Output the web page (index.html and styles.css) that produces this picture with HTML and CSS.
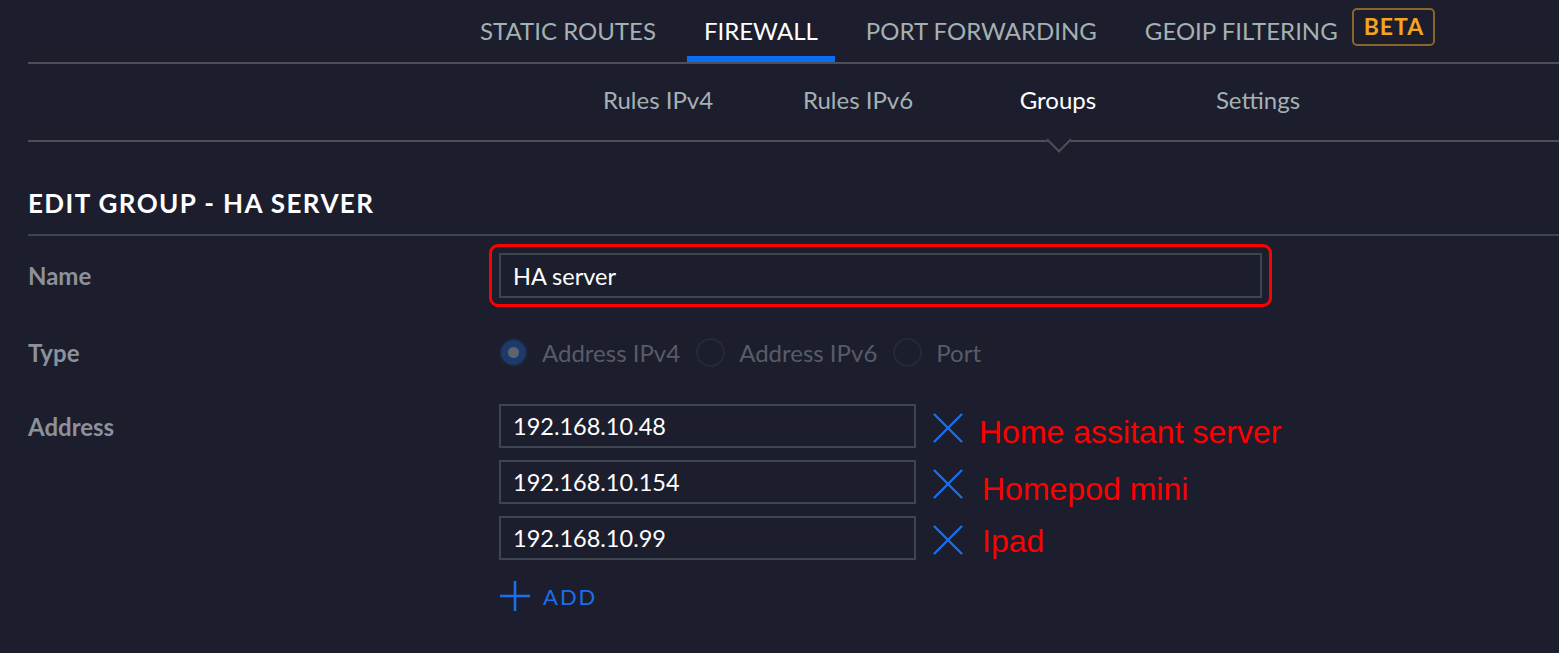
FILE: index.html
```html
<!DOCTYPE html>
<html>
<head>
<meta charset="utf-8">
<link rel="stylesheet" href="styles.css">
</head>
<body>
<div class="page">
  <nav class="tabs">
    <div class="tab">STATIC ROUTES</div>
    <div class="tab active">FIREWALL</div>
    <div class="tab">PORT FORWARDING</div>
    <div class="tab">GEOIP FILTERING <span class="beta">BETA</span></div>
  </nav>
  <nav class="subtabs">
    <div class="subtab">Rules IPv4</div>
    <div class="subtab">Rules IPv6</div>
    <div class="subtab active">Groups</div>
    <div class="subtab">Settings</div>
  </nav>
  <h1 class="title">EDIT GROUP - HA SERVER</h1>
  <div class="form">
    <div class="row row-name">
      <div class="label">Name</div>
      <div class="highlight">
        <div class="input wide">HA server</div>
      </div>
    </div>
    <div class="row row-type">
      <div class="label">Type</div>
      <div class="radios">
        <span class="radio checked"></span><span class="radio-label">Address IPv4</span>
        <span class="radio"></span><span class="radio-label">Address IPv6</span>
        <span class="radio"></span><span class="radio-label">Port</span>
      </div>
    </div>
    <div class="row row-address">
      <div class="label">Address</div>
      <div class="addresses">
        <div class="addr">
          <div class="input short">192.168.10.48</div>
          <svg class="x" viewBox="0 0 30 30" width="30" height="30"><path d="M1 1 L29 29 M29 1 L1 29" stroke="#1a6fee" stroke-width="2.4" fill="none"/></svg>
          <span class="note n1">Home assitant server</span>
        </div>
        <div class="addr">
          <div class="input short">192.168.10.154</div>
          <svg class="x" viewBox="0 0 30 30" width="30" height="30"><path d="M1 1 L29 29 M29 1 L1 29" stroke="#1a6fee" stroke-width="2.4" fill="none"/></svg>
          <span class="note n2">Homepod mini</span>
        </div>
        <div class="addr">
          <div class="input short">192.168.10.99</div>
          <svg class="x" viewBox="0 0 30 30" width="30" height="30"><path d="M1 1 L29 29 M29 1 L1 29" stroke="#1a6fee" stroke-width="2.4" fill="none"/></svg>
          <span class="note n3">Ipad</span>
        </div>
        <div class="add">
          <svg viewBox="0 0 30 30" width="30" height="30"><path d="M15 0 V30 M0 15 H30" stroke="#1a6fee" stroke-width="2.6" fill="none"/></svg>
          <span>ADD</span>
        </div>
      </div>
    </div>
  </div>
</div>
</body>
</html>
```
FILE: styles.css
```css
* { box-sizing: border-box; }
html, body { margin: 0; padding: 0; }
body {
  background: #1c1e2d;
  font-family: Lato, "Open Sans", sans-serif;
  color: #ffffff;
  width: 1559px;
  height: 653px;
  overflow: hidden;
}
.page {
  padding-left: 28px;
}
.tabs {
  display: flex;
  height: 64px;
  padding-left: 435px;
  gap: 14px;
  border-bottom: 2px solid #4e4f56;
}
.tab {
  display: flex;
  align-items: center;
  padding: 4px 17px 0;
  border-bottom: 6px solid transparent;
  font-size: 24px;
  color: #a4b1b4;
  white-space: nowrap;
}
.tab.active {
  color: #ffffff;
  border-bottom-color: #0a6ef5;
}
.beta {
  margin-left: 14px;
  border: 2px solid #8a652c;
  border-radius: 5px;
  color: #f3a521;
  font-weight: 700;
  font-size: 23px;
  padding: 3px 9px 4px 10px;
  letter-spacing: 1px;
  line-height: 27px;
  position: relative;
  top: -3px;
}
.subtabs {
  display: flex;
  height: 78px;
  padding-left: 530px;
  border-bottom: 2px solid #4e4f56;
}
.subtab {
  width: 200px;
  display: flex;
  align-items: center;
  justify-content: center;
  font-size: 24px;
  color: #a4b1b4;
  position: relative;
  padding-bottom: 6px;
}
.subtab.active { color: #ffffff; }
.subtab.active::after {
  content: "";
  position: absolute;
  left: 50%;
  bottom: -9px;
  width: 16px;
  height: 16px;
  margin-left: -8px;
  background: #1c1e2d;
  border-right: 2px solid #4e4f56;
  border-bottom: 2px solid #4e4f56;
  transform: rotate(45deg);
}
.title {
  margin: 0;
  height: 94px;
  padding-top: 46px;
  font-size: 26px;
  font-weight: 700;
  letter-spacing: 1.4px;
  color: #ffffff;
  border-bottom: 2px solid #3d4550;
  line-height: 30px;
}
.row {
  display: grid;
  grid-template-columns: 461px 1fr;
}
.label {
  font-size: 24px;
  font-weight: 700;
  color: #8c919b;
}
.row-name {
  padding-top: 8px;
  align-items: center;
}
.highlight {
  width: 783px;
  height: 63px;
  border: 3px solid #ff0000;
  border-radius: 9px;
  padding: 6px 7px;
}
.input {
  height: 45px;
  border: 2px solid #3d4550;
  padding: 0 12px;
  display: flex;
  align-items: center;
  font-size: 23.5px;
  color: #ffffff;
}
.input.wide { width: 100%; }
.input.short { width: 417px; height: 44px; }
.row-type {
  margin-top: 31px;
  align-items: center;
  height: 28px;
}
.radios {
  display: flex;
  align-items: center;
  padding-left: 10px;
}
.radio {
  width: 29px;
  height: 29px;
  border-radius: 50%;
  border: 2px solid #262937;
  margin-right: 14px;
  display: inline-flex;
  align-items: center;
  justify-content: center;
}
.radio.checked {
  background: #1c3a6c;
  border-color: #202436;
}
.radio.checked::after {
  content: "";
  width: 11px;
  height: 11px;
  border-radius: 50%;
  background: #5e6370;
}
.radio-label {
  font-size: 24px;
  color: #575c68;
  margin-right: 16px;
}
.row-address {
  margin-top: 38px;
}
.row-address .label { padding-top: 8px; }
.addresses {
  display: flex;
  flex-direction: column;
  gap: 12px;
  padding-left: 10px;
}
.addr {
  display: flex;
  align-items: center;
  height: 44px;
}
.x {
  margin-left: 17px;
  margin-top: 4px;
}
.note {
  font-family: "Liberation Sans", Arial, sans-serif;
  font-size: 32px;
  line-height: 32px;
  color: #ff0000;
  margin-left: 16px;
  margin-top: 11px;
}
.note.n2 { margin-left: 19px; margin-top: 13px; }
.note.n3 { margin-left: 19px; margin-top: 6px; }
.add {
  display: flex;
  align-items: center;
  gap: 13px;
  margin-top: 9px;
  padding-left: 1px;
  color: #1a6fee;
  font-size: 22px;
  letter-spacing: 2px;
}
```
